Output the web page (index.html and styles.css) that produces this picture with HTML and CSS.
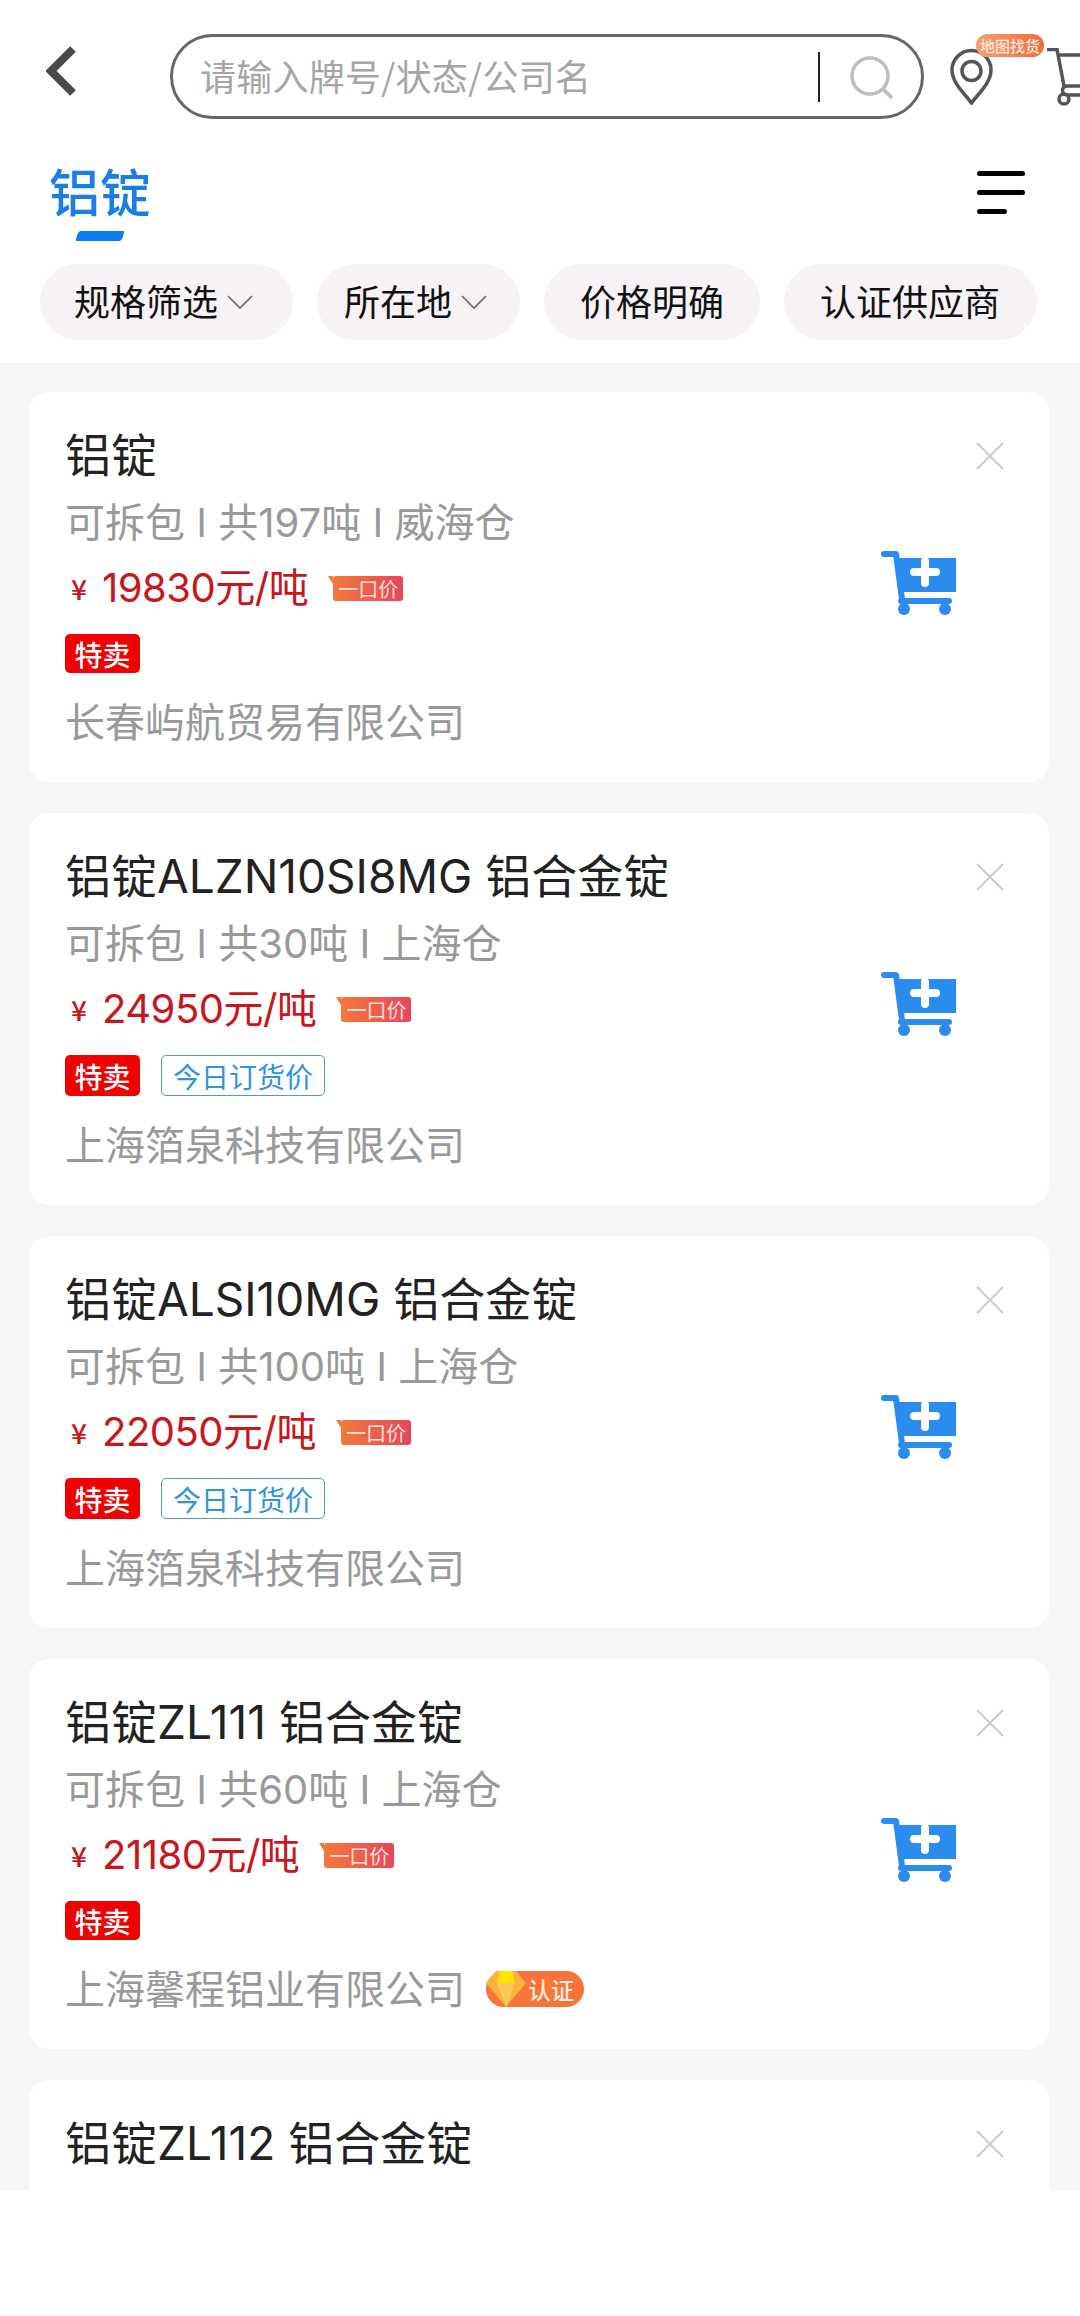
FILE: index.html
```html
<!DOCTYPE html>
<html lang="zh-CN">
<head>
    <meta charset="UTF-8">
    <meta name="viewport" content="width=device-width, initial-scale=1.0">
    <title>铝锭</title>
    <link rel="stylesheet" href="styles.css">
</head>
<body>
    <div class="page">
        <header class="top">
            <div class="search-row">
                <svg class="back" viewBox="0 0 32 52"><path d="M27 4 L5 26 L27 48" /></svg>
                <div class="search">
                    <span class="search-text">请输入牌号/状态/公司名</span>
                    <span class="search-line"></span>
                    <svg class="search-icon" viewBox="0 0 44 44"><circle cx="20" cy="20" r="18" /><path d="M33 33 L42 42" /></svg>
                </div>
                <div class="map-link">
                    <svg class="pin" viewBox="0 0 45 57"><path d="M21.5 55 C15 46 2 35 2 22 A19.5 19.5 0 0 1 41 22 C41 35 28 46 21.5 55 Z" /><circle cx="21.5" cy="23" r="9.5" /></svg>
                    <span class="map-badge">地图找货</span>
                </div>
                <svg class="top-cart" viewBox="0 0 40 60"><path d="M0 1.500 H10 L17 38 M11 7 H40 M40 38 H20 A4.500 4.500 0 0 0 20 47 H40" /><circle cx="17" cy="51" r="5" /></svg>
            </div>
            <div class="tab-row">
                <div class="tab">
                    <div class="tab-name">铝锭</div>
                    <div class="tab-mark"></div>
                </div>
                <div class="menu"><i></i><i></i><i class="short"></i></div>
            </div>
            <div class="filters">
                <div class="pill pill-spec">规格筛选<svg viewBox="0 0 26 16"><path d="M1 2 L13 14 L25 2" /></svg></div>
                <div class="pill pill-area">所在地<svg viewBox="0 0 26 16"><path d="M1 2 L13 14 L25 2" /></svg></div>
                <div class="pill">价格明确</div>
                <div class="pill pill-cert">认证供应商</div>
            </div>
        </header>

        <main class="list">
            <div class="card">
                <div class="info">
                    <div class="name">铝锭</div>
                    <div class="sub">可拆包 I 共197吨 I 威海仓</div>
                    <div class="price"><span class="yen">¥</span>19830元/吨<span class="fixed">一口价</span></div>
                    <div class="tags"><span class="tag-red">特卖</span></div>
                    <div class="company">长春屿航贸易有限公司</div>
                </div>
                <div class="actions">
                    <svg class="close" viewBox="0 0 28 28"><path d="M1 1 L27 27 M27 1 L1 27" /></svg>
                    <svg class="add-cart" viewBox="0 0 76 64"><path d="M3 3 H15 L20 41 H75 V7 H15 Z" class="fill" /><path d="M3 3 H15 L21 48" class="bar" /><path d="M20 50 H68" class="bar" /><circle cx="23" cy="58" r="6" class="fill" /><circle cx="64" cy="58" r="6" class="fill" /><path d="M33 21 H55 M44 10 V32" class="plus" /></svg>
                </div>
            </div>

            <div class="card">
                <div class="info">
                    <div class="name">铝锭ALZN10SI8MG 铝合金锭</div>
                    <div class="sub">可拆包 I 共30吨 I 上海仓</div>
                    <div class="price"><span class="yen">¥</span>24950元/吨<span class="fixed">一口价</span></div>
                    <div class="tags"><span class="tag-red">特卖</span><span class="tag-line">今日订货价</span></div>
                    <div class="company">上海箔泉科技有限公司</div>
                </div>
                <div class="actions">
                    <svg class="close" viewBox="0 0 28 28"><path d="M1 1 L27 27 M27 1 L1 27" /></svg>
                    <svg class="add-cart" viewBox="0 0 76 64"><path d="M3 3 H15 L20 41 H75 V7 H15 Z" class="fill" /><path d="M3 3 H15 L21 48" class="bar" /><path d="M20 50 H68" class="bar" /><circle cx="23" cy="58" r="6" class="fill" /><circle cx="64" cy="58" r="6" class="fill" /><path d="M33 21 H55 M44 10 V32" class="plus" /></svg>
                </div>
            </div>

            <div class="card">
                <div class="info">
                    <div class="name">铝锭ALSI10MG 铝合金锭</div>
                    <div class="sub">可拆包 I 共100吨 I 上海仓</div>
                    <div class="price"><span class="yen">¥</span>22050元/吨<span class="fixed">一口价</span></div>
                    <div class="tags"><span class="tag-red">特卖</span><span class="tag-line">今日订货价</span></div>
                    <div class="company">上海箔泉科技有限公司</div>
                </div>
                <div class="actions">
                    <svg class="close" viewBox="0 0 28 28"><path d="M1 1 L27 27 M27 1 L1 27" /></svg>
                    <svg class="add-cart" viewBox="0 0 76 64"><path d="M3 3 H15 L20 41 H75 V7 H15 Z" class="fill" /><path d="M3 3 H15 L21 48" class="bar" /><path d="M20 50 H68" class="bar" /><circle cx="23" cy="58" r="6" class="fill" /><circle cx="64" cy="58" r="6" class="fill" /><path d="M33 21 H55 M44 10 V32" class="plus" /></svg>
                </div>
            </div>

            <div class="card">
                <div class="info">
                    <div class="name">铝锭ZL111 铝合金锭</div>
                    <div class="sub">可拆包 I 共60吨 I 上海仓</div>
                    <div class="price"><span class="yen">¥</span>21180元/吨<span class="fixed">一口价</span></div>
                    <div class="tags"><span class="tag-red">特卖</span></div>
                    <div class="company">上海馨程铝业有限公司
                        <span class="cert">
                            <svg viewBox="0 0 40 36"><path d="M10 0 H30 L40 12 L20 36 L0 12 Z" fill="#f7b540" /><path d="M14 0 H26 L29 12 L20 36 L11 12 Z" fill="#fbc95a" /><path d="M14 0 H26 L29 12 H11 Z" fill="#ffe600" /></svg>
                            <span class="cert-text">认证</span>
                        </span>
                    </div>
                </div>
                <div class="actions">
                    <svg class="close" viewBox="0 0 28 28"><path d="M1 1 L27 27 M27 1 L1 27" /></svg>
                    <svg class="add-cart" viewBox="0 0 76 64"><path d="M3 3 H15 L20 41 H75 V7 H15 Z" class="fill" /><path d="M3 3 H15 L21 48" class="bar" /><path d="M20 50 H68" class="bar" /><circle cx="23" cy="58" r="6" class="fill" /><circle cx="64" cy="58" r="6" class="fill" /><path d="M33 21 H55 M44 10 V32" class="plus" /></svg>
                </div>
            </div>

            <div class="card">
                <div class="info">
                    <div class="name">铝锭ZL112 铝合金锭</div>
                </div>
                <div class="actions">
                    <svg class="close" viewBox="0 0 28 28"><path d="M1 1 L27 27 M27 1 L1 27" /></svg>
                </div>
            </div>
        </main>

        <div class="bottom"></div>
    </div>
</body>
</html>
```

FILE: styles.css
```css
* {
    box-sizing: border-box;
}
body {
    margin: 0;
    background-color: #fff;
    font-family: "Noto Sans CJK SC", "Noto Sans", sans-serif;
    overflow: hidden;
}
svg {
    display: block;
    flex: none;
}
.page {
    width: 1080px;
    height: 2316px;
    display: flex;
    flex-direction: column;
    overflow: hidden;
}

/* top bar */
.top {
    background-color: #fff;
    padding: 34px 0 23px;
}
.search-row {
    display: flex;
    align-items: flex-start;
    height: 85px;
}
.back {
    width: 32px;
    height: 52px;
    margin: 11px 0 0 46px;
}
.back path {
    fill: none;
    stroke: #4a4a4a;
    stroke-width: 8;
}
.search {
    flex: none;
    width: 754px;
    height: 85px;
    margin-left: 92px;
    padding-left: 27px;
    display: flex;
    align-items: center;
    border: 3px solid #666;
    border-radius: 43px;
}
.search-text {
    flex: 1;
    padding-bottom: 3px;
    font-size: 36px;
    letter-spacing: 0.25px;
    color: #a5a5a5;
}
.search-line {
    width: 2px;
    height: 50px;
    background-color: #222;
}
.search-icon {
    width: 44px;
    height: 44px;
    margin: 2px 27px 0 30px;
}
.search-icon circle,
.search-icon path {
    fill: none;
    stroke: #bdbdbd;
    stroke-width: 3.5;
}
.map-link {
    position: relative;
    flex: none;
    width: 45px;
    height: 57px;
    margin: 14px 0 0 26px;
}
.pin path,
.pin circle {
    fill: none;
    stroke: #555;
    stroke-width: 3.5;
}
.map-badge {
    position: absolute;
    left: 26px;
    top: -14px;
    width: 68px;
    height: 23px;
    border-radius: 12px;
    background: linear-gradient(90deg, #f5a070, #ee6d3c);
    color: #ffe9dc;
    font-size: 15px;
    font-weight: 500;
    line-height: 23px;
    text-align: center;
    white-space: nowrap;
}
.top-cart {
    width: 40px;
    height: 60px;
    margin: 14px 0 0 52px;
}
.top-cart path,
.top-cart circle {
    fill: none;
    stroke: #555;
    stroke-width: 3.5;
}

.tab-row {
    display: flex;
    justify-content: space-between;
    margin-top: 39px;
    padding: 0 55px 0 49px;
}
.tab-name {
    font-size: 51px;
    font-weight: 500;
    line-height: 64px;
    color: #1a7fe2;
}
.tab-mark {
    width: 46px;
    height: 10px;
    margin: 9px 0 0 28px;
    border-radius: 2px;
    background-color: #0d7bf2;
    transform: skewX(-20deg);
}
.menu {
    display: flex;
    flex-direction: column;
    gap: 14px;
    width: 48px;
    margin-top: 13px;
}
.menu i {
    display: block;
    height: 5px;
    border-radius: 3px;
    background-color: #000;
}
.menu .short {
    width: 30px;
}

.filters {
    display: flex;
    gap: 24px;
    margin-top: 23px;
    padding-left: 40px;
    white-space: nowrap;
}
.pill {
    display: flex;
    align-items: center;
    height: 76px;
    padding: 0 36px 5px;
    border-radius: 38px;
    background-color: #f6f2f5;
    font-size: 36px;
    color: #111;
}
.pill svg {
    width: 26px;
    height: 16px;
    margin: 5px 0 0 9px;
}
.pill path {
    fill: none;
    stroke: #666;
    stroke-width: 1.6;
}
.pill-spec {
    padding: 0 40px 5px 34px;
}
.pill-area {
    padding: 0 33px 5px 27px;
}
.pill-cert {
    padding: 0 37px 5px 36px;
}

/* product list */
.list {
    height: 1827px;
    flex: none;
    overflow: hidden;
    display: flex;
    flex-direction: column;
    gap: 31px;
    padding: 29px 31px 0 29px;
    background-color: #f6f6f6;
}
.card {
    flex: none;
    display: flex;
    justify-content: space-between;
    padding: 35px 0 38px 36px;
    border-radius: 20px;
    background-color: #fff;
}
.name {
    font-family: Inter, "Noto Sans CJK SC", sans-serif;
    font-size: 46px;
    line-height: 56px;
    color: #222;
}
.sub {
    margin-top: 16px;
    font-family: Inter, "Noto Sans CJK SC", sans-serif;
    font-size: 40px;
    line-height: 48px;
    color: #999;
}
.price {
    display: flex;
    align-items: center;
    margin-top: 17px;
    font-family: Inter, "Noto Sans CJK SC", sans-serif;
    font-size: 40px;
    line-height: 48px;
    letter-spacing: -0.5px;
    color: #c8161d;
}
.yen {
    width: 37px;
    padding-left: 6px;
    font-family: "Noto Sans CJK SC", sans-serif;
    font-size: 28px;
    font-weight: 500;
}
.fixed {
    position: relative;
    width: 70px;
    height: 25px;
    margin-left: 25px;
    border-radius: 3px;
    background: linear-gradient(90deg, #f2793a, #e8465c);
    color: #fbe3dc;
    font-family: "Noto Sans CJK SC", sans-serif;
    font-size: 20px;
    line-height: 25px;
    letter-spacing: 0;
    text-align: center;
}
.fixed::before {
    content: "";
    position: absolute;
    left: -5px;
    top: 0;
    border-top: 8px solid #f2793a;
    border-left: 5px solid transparent;
}
.tags {
    display: flex;
    gap: 21px;
    margin-top: 22px;
}
.tag-red {
    display: flex;
    align-items: center;
    justify-content: center;
    width: 75px;
    min-height: 39px;
    border-radius: 5px;
    background-color: #f00000;
    color: #fff;
    font-size: 28px;
    font-weight: 500;
    line-height: 1;
}
.tag-line {
    display: flex;
    align-items: center;
    justify-content: center;
    width: 164px;
    height: 41px;
    border: 1.5px solid #4c9cc8;
    border-radius: 5px;
    color: #2f94d8;
    font-size: 28px;
    line-height: 1;
}
.company {
    display: flex;
    align-items: center;
    margin-top: 23px;
    font-size: 40px;
    line-height: 48px;
    color: #999;
}
.cert {
    position: relative;
    display: flex;
    align-items: center;
    width: 98px;
    height: 36px;
    margin: 4px 0 0 21px;
    padding-left: 42px;
    border-radius: 18px;
    background-color: #f9733a;
}
.cert svg {
    position: absolute;
    left: 0;
    top: 0;
    width: 40px;
    height: 36px;
}
.cert-text {
    font-size: 23px;
    font-weight: 500;
    line-height: 36px;
    color: #fff1dc;
}
.actions {
    display: flex;
    flex-direction: column;
    align-items: flex-end;
    padding: 15px 45px 0 0;
}
.close {
    width: 28px;
    height: 28px;
}
.close path {
    fill: none;
    stroke: #ccc;
    stroke-width: 2;
}
.add-cart {
    width: 76px;
    height: 64px;
    margin: 81px 47px 0 0;
}
.add-cart .fill {
    fill: #2b8cf0;
}
.add-cart .bar {
    fill: none;
    stroke: #2b8cf0;
    stroke-width: 6;
    stroke-linecap: round;
    stroke-linejoin: round;
}
.add-cart .plus {
    fill: none;
    stroke: #fff;
    stroke-width: 8;
    stroke-linecap: round;
}
.bottom {
    flex: 1;
    background-color: #fff;
}
```
